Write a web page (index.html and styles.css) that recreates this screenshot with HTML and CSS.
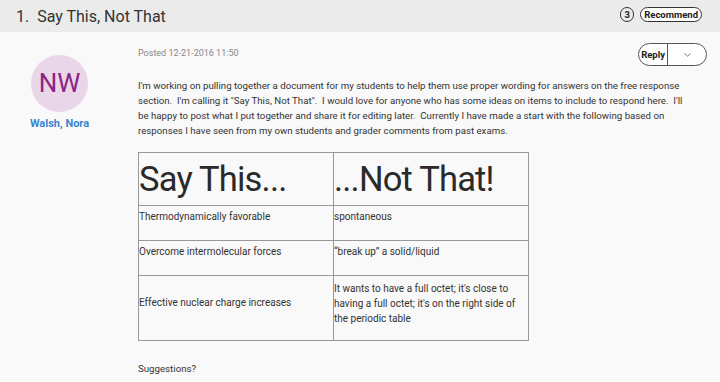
FILE: index.html
```html
<!DOCTYPE html>
<html lang="en">
<head>
    <meta charset="UTF-8">
    <meta name="viewport" content="width=device-width, initial-scale=1.0">
    <title>Say This, Not That</title>
    <link rel="stylesheet" href="styles.css">
</head>
<body>
    <div class="thread-head">
        <h1 class="thread-title">1.&nbsp; Say This, Not That</h1>
        <div class="head-actions">
            <span class="count">3</span>
            <button class="recommend">Recommend</button>
        </div>
    </div>
    <div class="post">
        <div class="author">
            <div class="avatar">NW</div>
            <a class="author-name" href="#">Walsh, Nora</a>
        </div>
        <div class="post-body">
            <div class="post-meta">
                <span class="posted">Posted 12-21-2016 11:50</span>
                <div class="reply">
                    <span class="reply-label">Reply</span>
                    <span class="reply-more">
                        <svg width="9" height="6" viewBox="0 0 9 6"><path d="M1.5 1.5 L4.5 4.2 L7.5 1.5" fill="none" stroke="#777" stroke-width="1"/></svg>
                    </span>
                </div>
            </div>
            <p class="intro">I'm working on pulling together a document for my students to help them use proper wording for answers on the free response section.&nbsp; I'm calling it "Say This, Not That".&nbsp; I would love for anyone who has some ideas on items to include to respond here.&nbsp; I'll be happy to post what I put together and share it for editing later.&nbsp; Currently I have made a start with the following based on responses I have seen from my own students and grader comments from past exams.</p>
            <table class="compare">
                <tr class="big">
                    <td>Say This...</td>
                    <td>...Not That!</td>
                </tr>
                <tr class="r1">
                    <td>Thermodynamically favorable</td>
                    <td>spontaneous</td>
                </tr>
                <tr class="r2">
                    <td>Overcome intermolecular forces</td>
                    <td>“break up” a solid/liquid</td>
                </tr>
                <tr class="r3">
                    <td class="mid">Effective nuclear charge increases</td>
                    <td>It wants to have a full octet; it's close to having a full octet; it's on the right side of the periodic table</td>
                </tr>
            </table>
            <p class="closing">Suggestions?</p>
        </div>
    </div>
</body>
</html>
```

FILE: styles.css
```css
body {
    margin: 0;
    background-color: #f9f9f9;
    font-family: Roboto, "Liberation Sans", sans-serif;
    color: #333;
}
.thread-head {
    display: flex;
    align-items: center;
    justify-content: space-between;
    height: 32px;
    background-color: #ebebeb;
    padding: 0 18px 0 16px;
}
.thread-title {
    margin: 0;
    font-size: 16px;
    font-weight: 400;
    color: #333;
}
.head-actions {
    display: flex;
    align-items: center;
    gap: 6px;
    margin-top: -4px;
}
.count {
    display: inline-block;
    height: 13px;
    min-width: 8px;
    padding: 0 2px;
    border: 1px solid #333;
    border-radius: 8px;
    font-size: 9.5px;
    font-weight: 700;
    line-height: 13px;
    text-align: center;
    color: #222;
}
.recommend {
    height: 15px;
    padding: 0 3px;
    border: 1px solid #333;
    border-radius: 8px;
    background-color: #fff;
    font-family: Roboto, "Liberation Sans", sans-serif;
    font-size: 9.5px;
    font-weight: 700;
    color: #222;
    line-height: 13px;
}
.post {
    display: flex;
    padding-top: 14px;
}
.author {
    width: 138px;
    display: flex;
    flex-direction: column;
    align-items: center;
    padding-right: 19px;
    box-sizing: border-box;
    padding-top: 9px;
}
.avatar {
    width: 57px;
    height: 57px;
    border-radius: 50%;
    background-color: #ead6e9;
    color: #8b2585;
    font-size: 26px;
    line-height: 57px;
    text-align: center;
}
.author-name {
    margin-top: 5px;
    font-size: 11px;
    font-weight: 700;
    color: #3b86d1;
    text-decoration: none;
}
.post-body {
    width: 569px;
}
.post-meta {
    display: flex;
    justify-content: space-between;
    align-items: flex-start;
}
.posted {
    font-size: 9px;
    color: #888;
    line-height: 14px;
}
.reply {
    display: flex;
    height: 21px;
    margin-top: -3px;
    border: 1px solid #555;
    border-radius: 12px;
    background-color: #fff;
    font-size: 9.5px;
    font-weight: 700;
    color: #222;
}
.reply-label {
    padding: 0 2px 0 2px;
    line-height: 21px;
    border-right: 1px solid #555;
}
.reply-more {
    width: 38px;
    display: flex;
    align-items: center;
    justify-content: center;
}
.intro {
    max-width: 550px;
    margin: 12px 0 0 0;
    font-size: 9.7px;
    line-height: 15px;
    color: #333;
}
.compare {
    margin-top: 14px;
    width: 391px;
    border-collapse: collapse;
    font-size: 10px;
    color: #333;
}
.compare td {
    border: 1px solid #999;
    padding: 3px 0 0 0;
    vertical-align: top;
    line-height: 15px;
}
.compare td:first-child {
    width: 194px;
}
.compare .big td {
    height: 51px;
    padding: 0;
    font-size: 34.5px;
    letter-spacing: -0.8px;
    line-height: 52px;
    color: #2a2a2a;
}
.compare .r1 td,
.compare .r2 td {
    height: 31px;
}
.compare .r3 td {
    height: 59px;
    padding-top: 5px;
}
.compare .r3 .mid {
    height: 45px;
    padding-top: 19px;
}
.closing {
    margin: 22px 0 0 0;
    font-size: 9.7px;
}
```
